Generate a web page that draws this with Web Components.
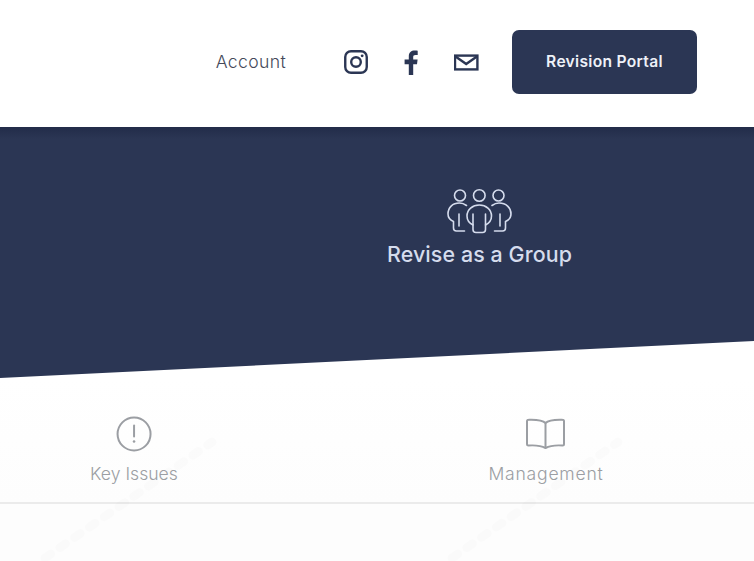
<!DOCTYPE html>
<html lang="en"><head><meta charset="utf-8"><title>Revise</title>
<style>
html,body{margin:0;padding:0;background:#fff}
body{width:754px;height:561px;overflow:hidden;position:relative;font-family:"Inter","Lato","Liberation Sans",sans-serif}
</style></head><body>
<top-bar>
  <nav-link>Account</nav-link>
  <social-icons></social-icons>
  <portal-button>Revision Portal</portal-button>
</top-bar>
<hero-band><group-feature>Revise as a Group</group-feature></hero-band>
<topic-row>
  <topic-item kind="alert" style="--center:134px;--ls:.02px">Key Issues</topic-item>
  <topic-item kind="book" style="--center:546px;--ls:.75px">Management</topic-item>
</topic-row>
<page-rest></page-rest>
<faint-marks></faint-marks>
<script>
const def=(name,html)=>customElements.define(name,class extends HTMLElement{
  connectedCallback(){ if(this.shadowRoot)return; const r=this.attachShadow({mode:'open'}); r.innerHTML=typeof html==='function'?html(this):html; }
});
def('top-bar',`<style>:host{display:flex;align-items:center;justify-content:flex-end;height:127px;box-sizing:border-box;padding:0 57px 3px 0;background:#fff}</style><slot></slot>`);
def('nav-link',`<style>:host{display:block;font:300 17.6px/24px "Inter",sans-serif;letter-spacing:.35px;color:#44495a;margin-right:59px}</style><slot></slot>`);
def('social-icons',`<style>:host{display:flex;align-items:center;gap:30px;margin-right:33px}svg{display:block}</style>
<svg width="24" height="24" viewBox="0 0 25 25" fill="none" stroke="#2b3654" style="margin:0 2px 0 -1px"><rect x="1.300" y="1.300" width="22.400" height="22.400" rx="6" stroke-width="2.500"/><circle cx="12.500" cy="12.500" r="5" stroke-width="2.500"/><circle cx="18.900" cy="6.100" r="1.500" fill="#2b3654" stroke="none"/></svg>
<svg width="25" height="25" viewBox="0 0 25 25" fill="#2b3654" style="margin-left:-1px"><path d="M9.800 25V14.200H5.600V9.600h4.200V6.400C9.800 2.400 12.300.5 15.700.5c1.300 0 2.400.1 3 .2v4.200h-2.200c-1.800 0-2.300.9-2.300 2.300v2.400h4.400l-.6 4.600h-3.800V25z"/></svg>
<svg width="25" height="25" viewBox="0 0 25 25" fill="none" stroke="#2b3654"><rect x="1" y="5.600" width="22.400" height="13.800" stroke-width="2.400"/><path d="M1.500 6.500l10.700 7.600 10.700-7.600" stroke-width="2.400"/></svg>`);
def('portal-button',`<style>:host{display:flex;align-items:center;justify-content:center;width:185px;height:64px;background:#2b3654;border-radius:7px;color:#eef1f8;font:600 15.600px/20px "Inter",sans-serif;letter-spacing:.3px}</style><slot></slot>`);
def('hero-band',`<style>:host{display:flex;justify-content:center;box-sizing:border-box;height:251px;padding:61px 0 0 205px;background:linear-gradient(#222c49,#2b3654 12px);clip-path:polygon(0 0,100% 0,100% 85.26%,0 100%)}</style><slot></slot>`);
def('group-feature',`<style>:host{display:flex;flex-direction:column;align-items:center;height:80px;color:#d5dced;font:500 21.400px/28px "Inter",sans-serif;letter-spacing:.1px}svg{display:block;margin-bottom:6px}</style>
<svg width="66" height="46" viewBox="-.5 0 66 46" fill="none" stroke="#d5dced" stroke-width="1.600" stroke-linejoin="round" stroke-linecap="round"><circle cx="13.500" cy="7.500" r="5.500"/><circle cx="32.800" cy="7.500" r="5.800"/><circle cx="52" cy="7.500" r="5.500"/>
<path d="M20 17.500C18 16 15.500 15 13 15 6 15 1.500 19.500 1.500 26c0 3 1 5.500 5.500 7.500V40c0 2 1 3 3 3h8"/><path d="M12.500 26v12"/>
<path d="M45.500 17.500C47.500 16 50 15 52.500 15c7 0 12 4.500 12 11 0 3-1 5.500-5.500 7.500V40c0 2-1 3-3 3h-8"/><path d="M53.500 26v12"/>
<path d="M26.500 37C22.500 35 20.500 31.500 20.500 28 20.500 21.500 26 17 32.800 17S45 21.500 45 28c0 3.500-2 7-6 9"/><path d="M26.500 26v15.500c0 2 1 3 3 3h6.500c2 0 3-1 3-3V26"/></svg><slot></slot>`);
def('topic-row',`<style>:host{display:block;position:relative;box-sizing:border-box;height:126px;background:linear-gradient(#fff,#fdfdfd);border-bottom:2px solid #ebebeb}</style><slot></slot>`);
const icons={alert:`<svg width="36" height="36" viewBox="0 0 36 36" fill="none" stroke="#9b9ea3" stroke-width="2"><circle cx="18" cy="18" r="16.500"/><path d="M18 9.500v11" stroke-linecap="round"/><circle cx="18" cy="25.500" r="1.300" fill="#9b9ea3" stroke="none"/></svg>`,
book:`<svg width="40" height="32" viewBox="0 0 40 32" fill="none" stroke="#9b9ea3" stroke-width="2" stroke-linejoin="round"><path d="M20 5C17 2 12 1.500 3 1.800c-1 0-1.500.7-1.500 1.500V26c0 1 .5 1.500 1.500 1.500C11 27 16 27.800 20 30c4-2.200 9-3 17-2.500 1 0 1.500-.5 1.500-1.500V3.300c0-.8-.5-1.500-1.500-1.500C28 1.500 23 2 20 5z"/><path d="M20 5v25"/></svg>`};
def('topic-item',h=>`<style>:host{position:absolute;z-index:2;top:38px;left:var(--center);transform:translateX(-50%);display:flex;flex-direction:column;align-items:center;color:#9b9ea3;font:300 17.600px/24px "Inter",sans-serif;letter-spacing:var(--ls);white-space:nowrap}.i{height:36px;display:flex;align-items:center;margin-bottom:10px}svg{display:block}</style><div class="i">${icons[h.getAttribute('kind')]}</div><slot></slot>`);
def('page-rest',`<style>:host{display:block;height:57px;background:#fdfdfd}</style>`);
def('faint-marks',`<style>:host{position:absolute;z-index:1;left:0;top:378px;width:754px;height:183px;pointer-events:none}svg{display:block}</style>
<svg width="754" height="183" viewBox="0 0 754 183" fill="none" stroke="rgba(0,0,0,.012)" stroke-width="9" stroke-linecap="round" stroke-dasharray="7 11"><path d="M45 180L212 64"/><path d="M452 180L618 64"/></svg>`);
</script>
</body></html>
